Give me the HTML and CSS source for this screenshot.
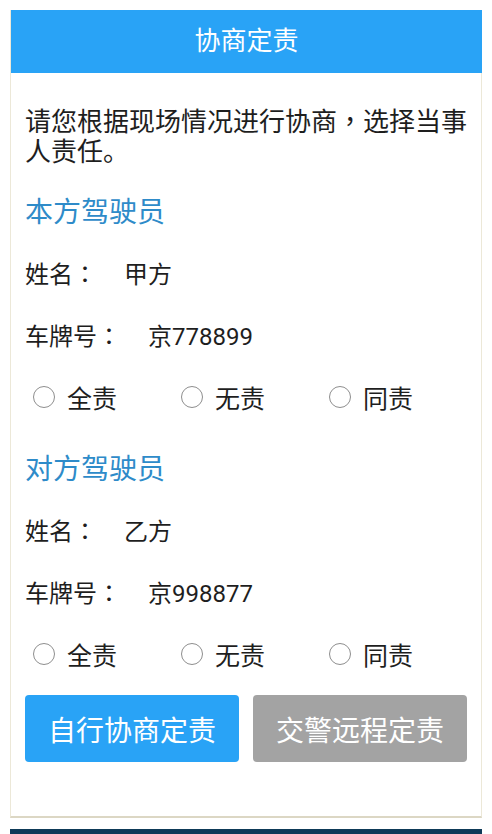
FILE: index.html
```html
<!DOCTYPE html>
<html lang="zh-CN">
<head>
  <meta charset="UTF-8">
  <meta name="viewport" content="width=device-width, initial-scale=1.0">
  <title>协商定责</title>
  <link rel="stylesheet" href="styles.css">
</head>
<body>
  <div class="card">
    <div class="header">协商定责</div>

    <div class="content">
      <p class="intro">请您根据现场情况进行协商<span class="punct" lang="zh-TW">，</span>选择当事人责任。</p>

      <div class="section">
        <h2 class="title">本方驾驶员</h2>
        <div class="row"><span class="label">姓名<span class="punct" lang="zh-TW">：</span></span><span class="value">甲方</span></div>
        <div class="row"><span class="label">车牌号<span class="punct" lang="zh-TW">：</span></span><span class="value">京778899</span></div>
        <div class="choices">
          <label class="choice"><input type="radio" name="self"><span>全责</span></label>
          <label class="choice"><input type="radio" name="self"><span>无责</span></label>
          <label class="choice"><input type="radio" name="self"><span>同责</span></label>
        </div>
      </div>

      <div class="section second">
        <h2 class="title">对方驾驶员</h2>
        <div class="row"><span class="label">姓名<span class="punct" lang="zh-TW">：</span></span><span class="value">乙方</span></div>
        <div class="row"><span class="label">车牌号<span class="punct" lang="zh-TW">：</span></span><span class="value">京998877</span></div>
        <div class="choices">
          <label class="choice"><input type="radio" name="other"><span>全责</span></label>
          <label class="choice"><input type="radio" name="other"><span>无责</span></label>
          <label class="choice"><input type="radio" name="other"><span>同责</span></label>
        </div>
      </div>

      <div class="actions">
        <button class="btn primary">自行协商定责</button>
        <button class="btn gray">交警远程定责</button>
      </div>
    </div>
  </div>

  <div class="footer-bar"></div>
</body>
</html>
```

FILE: styles.css
```css
body {
  margin: 0;
  padding: 10px 10px 0;
  background: #fff;
  font-family: Roboto, "Noto Sans CJK SC", sans-serif;
  color: #1e1e1e;
}

.card {
  border: 1px solid #ece8d8;
  border-top: none;
  border-bottom: 2px solid #dcd7c4;
  background: #fff;
}

.header {
  height: 63px;
  margin: 0 -1px 0 0;
  background: #29a3f6;
  color: #fff;
  font-size: 26px;
  line-height: 63px;
  text-align: center;
}

.content {
  padding: 34px 12px 54px 14px;
}

.intro {
  margin: 0 0 15px;
  font-size: 26px;
  line-height: 30px;
}

/* centred full-width punctuation, as on the device */
.punct {
  font-family: "Noto Sans CJK TC", sans-serif;
  line-height: 0;
}

.section.second {
  margin-top: 13px;
}

.title {
  margin: 0;
  height: 62px;
  line-height: 62px;
  font-size: 28px;
  font-weight: normal;
  color: #2e8bc9;
}

.row {
  height: 62px;
  line-height: 62px;
  font-size: 24px;
}

.value {
  margin-left: 27px;
}

.choices {
  display: flex;
  height: 58px;
  align-items: center;
  padding-left: 8px;
  font-size: 25px;
}

.choice {
  display: flex;
  flex-shrink: 0;
  align-items: center;
  gap: 12px;
  width: 148px;
}

.choice input {
  appearance: none;
  margin: 0;
  width: 22px;
  height: 22px;
  border: 1.5px solid #8e8e8e;
  border-radius: 50%;
  background: #fff;
}

.choice input:checked {
  background: radial-gradient(circle, #29a3f6 45%, #fff 50%);
  border-color: #29a3f6;
}

.actions {
  display: flex;
  gap: 14px;
  margin-top: 12px;
}

.btn {
  width: 214px;
  height: 67px;
  border: none;
  border-radius: 4px;
  color: #fff;
  font-family: inherit;
  font-size: 28px;
  cursor: pointer;
}

.primary {
  background: #29a3f6;
}

.gray {
  background: #a3a3a3;
}

.footer-bar {
  height: 20px;
  margin-top: 11px;
  background: #0e3a58;
}
```
